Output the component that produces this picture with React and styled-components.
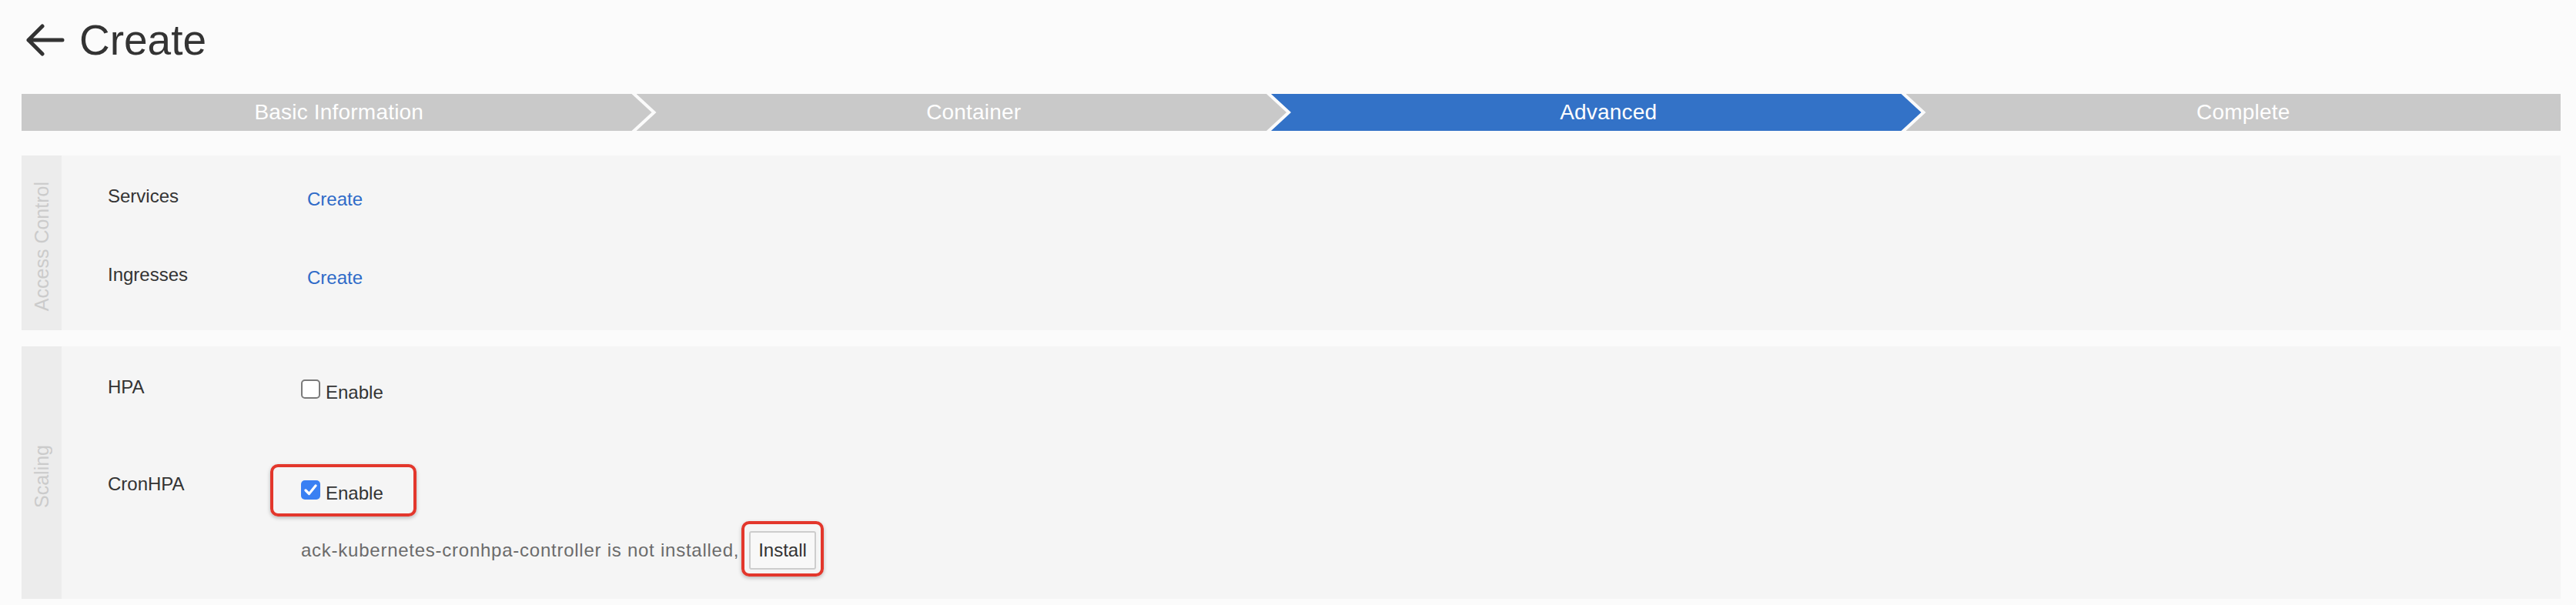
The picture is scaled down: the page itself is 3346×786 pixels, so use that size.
import React from "react";
import styled, { createGlobalStyle } from "styled-components";

const GlobalStyle = createGlobalStyle`
  body {
    margin: 0;
    background: #fbfbfb;
    font-family: "Liberation Sans", Arial, sans-serif;
    color: #333;
  }
`;

const Page = styled.div`
  padding: 25px 20px 0 28px;
`;

const Header = styled.div`
  display: flex;
  align-items: center;
  height: 54px;
  padding-left: 6px;
  gap: 19px;
`;

const Title = styled.h1`
  margin: 0;
  font-size: 55px;
  line-height: 54px;
  font-weight: 400;
  color: #333;
`;

const Steps = styled.div`
  display: flex;
  height: 48px;
  margin-top: 43px;
`;

const clips = {
  first: "polygon(0 0, calc(100% - 32px) 0, calc(100% - 6px) 50%, calc(100% - 32px) 100%, 0 100%)",
  middle:
    "polygon(0 0, calc(100% - 32px) 0, calc(100% - 6px) 50%, calc(100% - 32px) 100%, 0 100%, 26px 50%)",
  last: "polygon(0 0, 100% 0, 100% 100%, 0 100%, 26px 50%)",
};

const Step = styled.div`
  flex: 1 1 0;
  box-sizing: content-box;
  margin-left: ${(p) => (p.$pos === "first" ? 0 : -26)}px;
  padding-left: ${(p) => (p.$pos === "first" ? 0 : 26)}px;
  clip-path: ${(p) => clips[p.$pos]};
  background: ${(p) => (p.$active ? "#3372c7" : "#c9c9c9")};
  color: #fff;
  font-size: 28px;
  font-weight: 300;
  line-height: 48px;
  text-align: center;
  white-space: nowrap;
  letter-spacing: 0.2px;
`;

const Panel = styled.section`
  display: flex;
  background: #f5f5f5;
  margin-top: ${(p) => p.$mt}px;
`;

const Side = styled.div`
  width: 52px;
  flex: none;
  background: #ececec;
  display: flex;
  align-items: center;
  justify-content: center;
  padding-top: 9px;
  box-sizing: border-box;
`;

const SideText = styled.span`
  writing-mode: vertical-rl;
  transform: rotate(180deg);
  font-size: 25px;
  color: #cbcbcb;
  white-space: nowrap;
`;

const Body = styled.div`
  flex: 1;
  display: flex;
  flex-direction: column;
  gap: ${(p) => p.$gap}px;
  padding: 39px 0 ${(p) => p.$pb}px 60px;
`;

const Row = styled.div`
  display: grid;
  grid-template-columns: 251px 1fr;
  align-items: start;
`;

const Label = styled.div`
  font-size: 24px;
  line-height: 28px;
  color: #333;
`;

const Control = styled.div`
  padding-top: ${(p) => p.$offset}px;
  font-size: 24px;
  line-height: 28px;
`;

const Link = styled.a`
  margin-left: 8px;
  color: #2f6bc8;
  text-decoration: none;
  cursor: pointer;
`;

const CheckLabel = styled.label`
  display: inline-flex;
  align-items: flex-start;
  gap: 7px;
  color: #333;
`;

const Box = styled.span`
  width: 25px;
  height: 25px;
  margin-top: -3px;
  box-sizing: border-box;
  border-radius: 5px;
  display: flex;
  align-items: center;
  justify-content: center;
  background: ${(p) => (p.$checked ? "#3a80f3" : "#fff")};
  border: ${(p) => (p.$checked ? "none" : "2px solid #7a7a7a")};
`;

const Highlight = styled.span`
  position: relative;
  display: inline-flex;
  &::after {
    content: "";
    position: absolute;
    top: ${(p) => p.$t}px;
    right: ${(p) => p.$r}px;
    bottom: ${(p) => p.$b}px;
    left: ${(p) => p.$l}px;
    border: 4px solid #e3372c;
    border-radius: 10px;
    box-shadow: 0 2px 5px rgba(0, 0, 0, 0.25);
    pointer-events: none;
  }
`;

const HelpRow = styled.div`
  display: flex;
  align-items: center;
  gap: 13px;
  margin-top: 35px;
  color: #6b6b6b;
`;

const HelpText = styled.span`
  letter-spacing: 0.75px;
`;

const Button = styled.button`
  height: 50px;
  padding: 0 10px;
  border: 2px solid #cdcdcd;
  border-radius: 3px;
  background: #f8f8f8;
  font-family: inherit;
  font-size: 24px;
  color: #333;
`;

function BackArrow() {
  return (
    <svg width="50" height="42" viewBox="0 0 50 42" fill="none">
      <path
        d="M47 21H3M21 3L3 21l18 18"
        stroke="#333"
        strokeWidth="5"
        strokeLinecap="round"
        strokeLinejoin="round"
      />
    </svg>
  );
}

function Checkbox({ checked }) {
  return (
    <Box $checked={checked}>
      {checked && (
        <svg width="17" height="15" viewBox="0 0 17 15" fill="none">
          <path
            d="M2 8l4.5 4.5L15 2"
            stroke="#fff"
            strokeWidth="3.2"
            strokeLinecap="round"
            strokeLinejoin="round"
          />
        </svg>
      )}
    </Box>
  );
}

const steps = ["Basic Information", "Container", "Advanced", "Complete"];

export default function App() {
  return (
    <>
      <GlobalStyle />
      <Page>
        <Header>
          <BackArrow />
          <Title>Create</Title>
        </Header>

        <Steps>
          {steps.map((s, i) => (
            <Step
              key={s}
              $active={i === 2}
              $pos={i === 0 ? "first" : i === steps.length - 1 ? "last" : "middle"}
            >
              {s}
            </Step>
          ))}
        </Steps>

        <Panel $mt={32}>
          <Side>
            <SideText>Access Control</SideText>
          </Side>
          <Body $gap={70} $pb={54}>
            <Row>
              <Label>Services</Label>
              <Control $offset={4}>
                <Link>Create</Link>
              </Control>
            </Row>
            <Row>
              <Label>Ingresses</Label>
              <Control $offset={4}>
                <Link>Create</Link>
              </Control>
            </Row>
          </Body>
        </Panel>

        <Panel $mt={21}>
          <Side>
            <SideText>Scaling</SideText>
          </Side>
          <Body $gap={91} $pb={38}>
            <Row>
              <Label>HPA</Label>
              <Control $offset={7}>
                <CheckLabel>
                  <Checkbox />
                  Enable
                </CheckLabel>
              </Control>
            </Row>
            <Row>
              <Label>CronHPA</Label>
              <Control $offset={7}>
                <Highlight $t={-24} $r={-43} $b={-16} $l={-40}>
                  <CheckLabel>
                    <Checkbox checked />
                    Enable
                  </CheckLabel>
                </Highlight>
                <HelpRow>
                  <HelpText>ack-kubernetes-cronhpa-controller is not installed,</HelpText>
                  <Highlight $t={-13} $r={-10} $b={-9} $l={-10}>
                    <Button>Install</Button>
                  </Highlight>
                </HelpRow>
              </Control>
            </Row>
          </Body>
        </Panel>
      </Page>
    </>
  );
}
